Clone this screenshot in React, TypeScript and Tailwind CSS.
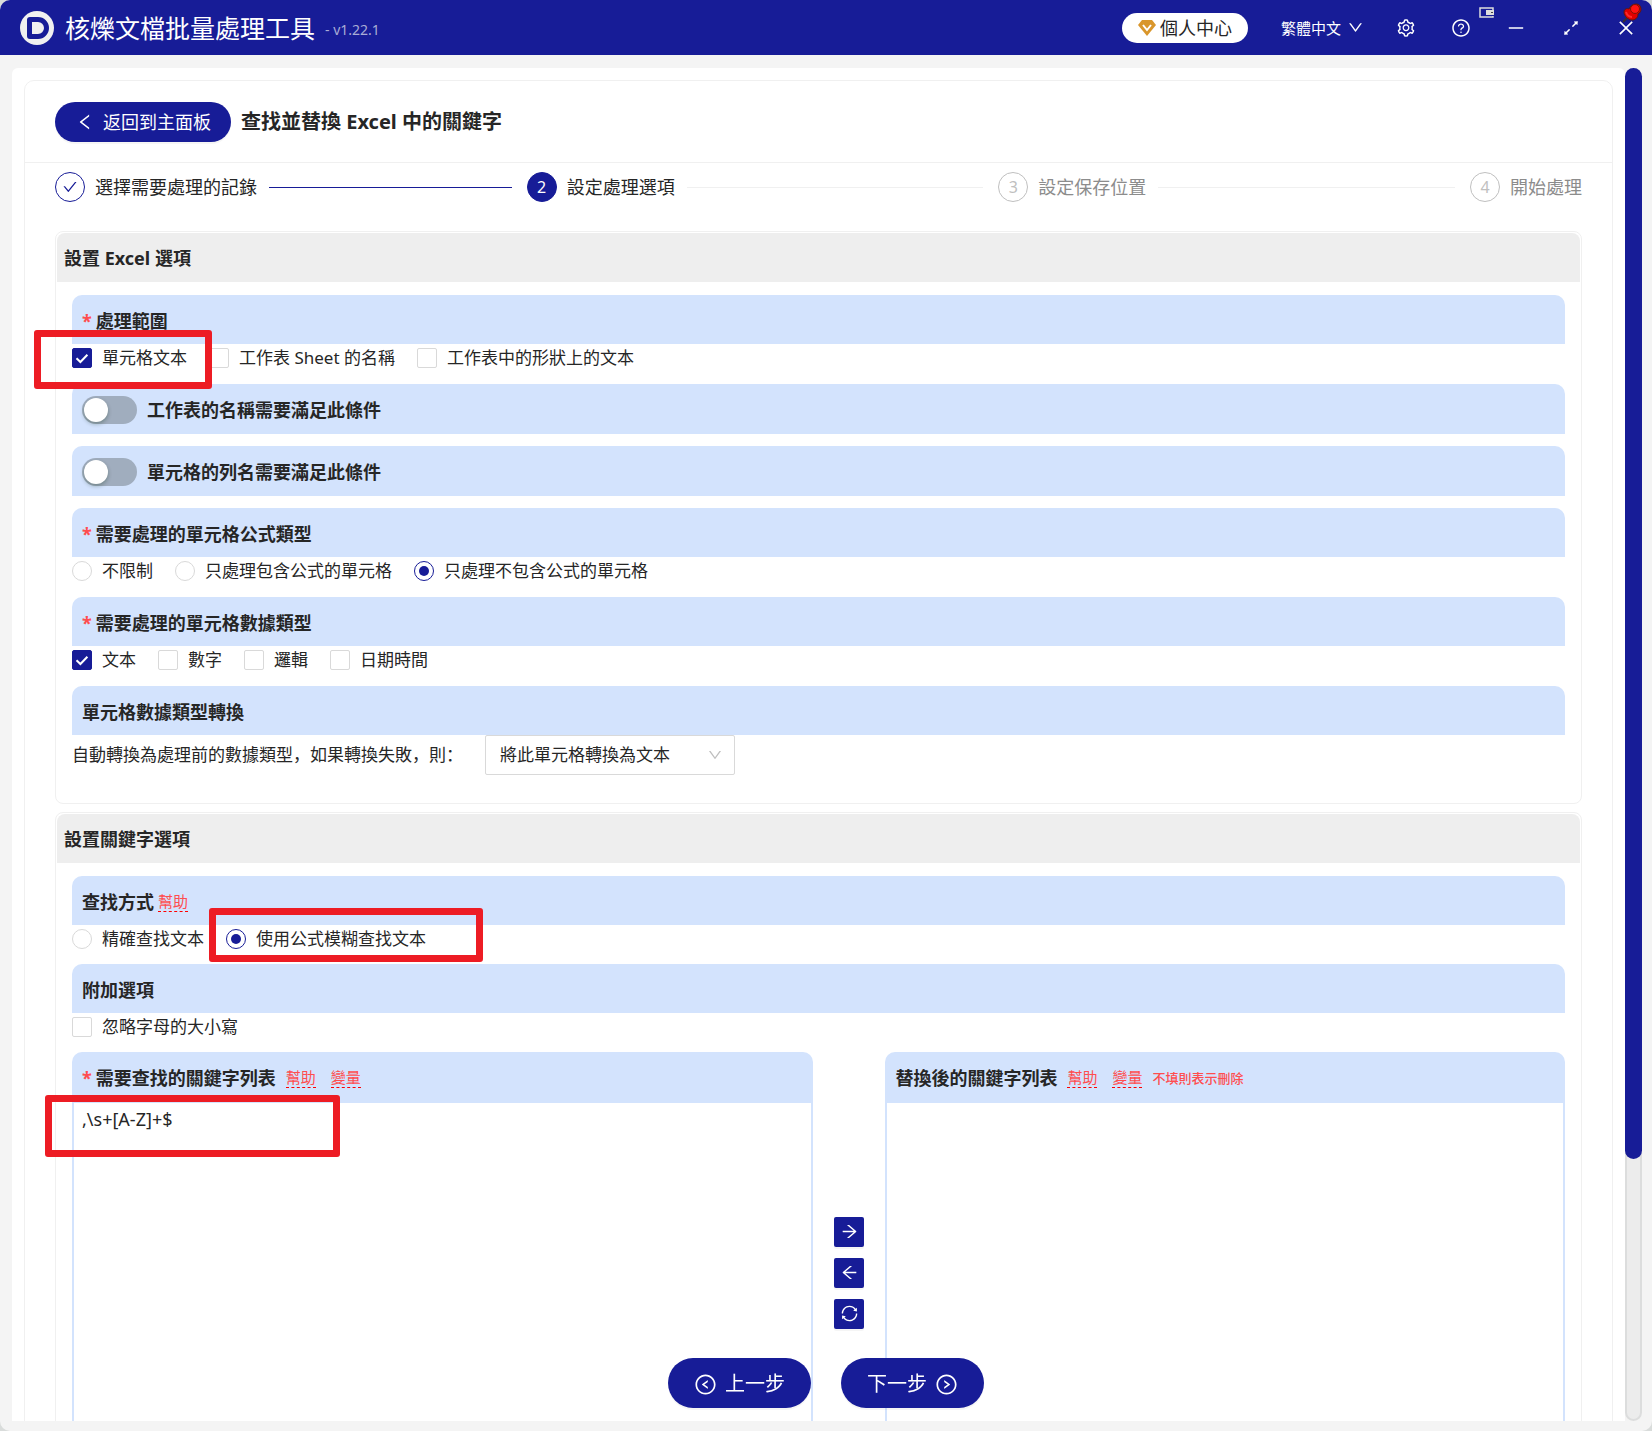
import type { ReactNode } from "react";
import clsx from "clsx";
import {
  AiOutlineArrowLeft,
  AiOutlineArrowRight,
  AiOutlineArrowsAlt,
  AiOutlineCheck,
  AiOutlineClose,
  AiOutlineDown,
  AiOutlineLeft,
  AiOutlineLeftCircle,
  AiOutlineMinus,
  AiOutlineQuestionCircle,
  AiOutlineRightCircle,
  AiOutlineSetting,
  AiOutlineSync
} from "react-icons/ai";

const steps = [
  { label: "選擇需要處理的記錄", state: "done" },
  { label: "設定處理選項", state: "active" },
  { label: "設定保存位置", state: "wait" },
  { label: "開始處理", state: "wait" }
];

function Steps() {
  return (
    <ol className="flex items-center">
      {steps.map((step, index) => (
        <li key={step.label} className={clsx("flex items-center", index < steps.length - 1 && "flex-1")}>
          <span
            className={clsx(
              "mr-2.5 flex h-[30px] w-[30px] items-center justify-center rounded-full border text-base",
              step.state === "done" && "border-[#171c97] text-[#171c97]",
              step.state === "active" && "border-[#171c97] bg-[#171c97] text-white",
              step.state === "wait" && "border-[#bfbfbf] text-[#bfbfbf]"
            )}
          >
            {step.state === "done" ? <AiOutlineCheck className="h-4 w-4" /> : index + 1}
          </span>
          <span className={step.state === "wait" ? "text-[#8c8c8c]" : ""}>{step.label}</span>
          {index < steps.length - 1 && (
            <span
              className={clsx("mr-[15px] ml-3 h-px flex-1", step.state === "done" ? "bg-[#171c97]" : "bg-[#f0f0f0]")}
            />
          )}
        </li>
      ))}
    </ol>
  );
}

function Card({ title, children }: { title: string; children: ReactNode }) {
  return (
    <section className="rounded-lg border border-[#f0f0f0] p-px">
      <h2 className="flex h-[49px] items-center rounded-t-lg bg-[#eeeeee] px-[7px] font-bold">{title}</h2>
      {children}
    </section>
  );
}

function Bar({ required, children }: { required?: boolean; children: ReactNode }) {
  return (
    <div className="flex h-[49px] items-center rounded-t-[10px] bg-[#d3e3fd] px-2.5 pt-0.5 font-bold">
      {required && <span className="mr-1 text-[#ff4d4f]">*</span>}
      {children}
    </div>
  );
}

function SwitchBar({ label }: { label: string }) {
  return (
    <label className="flex h-[50px] items-center gap-2.5 rounded-t-[10px] bg-[#d3e3fd] px-2.5 pt-0.5 font-bold">
      <span className="relative flex h-7 w-[55px]">
        <input
          type="checkbox"
          role="switch"
          className="peer h-7 w-[55px] appearance-none rounded-full bg-[#a0adbe] checked:bg-[#171c97]"
        />
        <span className="pointer-events-none absolute top-0.5 left-0.5 h-6 w-6 rounded-full bg-white shadow-[0_2px_4px_rgba(0,35,11,0.3)] peer-checked:left-[29px]" />
      </span>
      {label}
    </label>
  );
}

function Check({ label, checked }: { label: string; checked?: boolean }) {
  return (
    <label className="flex items-center gap-2.5">
      <span className="relative flex h-5 w-5">
        <input
          type="checkbox"
          defaultChecked={checked}
          className="peer h-5 w-5 appearance-none rounded-xs border border-[#d9d9d9] bg-white checked:border-[#171c97] checked:bg-[#171c97]"
        />
        <svg
          viewBox="0 0 20 20"
          className="pointer-events-none absolute inset-0 hidden h-5 w-5 peer-checked:block"
          fill="none"
          stroke="white"
          strokeWidth="2"
        >
          <path d="M4.5 10.2 8.4 14l7-7.3" />
        </svg>
      </span>
      {label}
    </label>
  );
}

function Radio({ name, label, checked }: { name: string; label: string; checked?: boolean }) {
  return (
    <label className="flex items-center gap-2.5">
      <span className="relative flex h-5 w-5">
        <input
          type="radio"
          name={name}
          defaultChecked={checked}
          className="peer h-5 w-5 appearance-none rounded-full border border-[#d9d9d9] bg-white checked:border-[#171c97]"
        />
        <span className="pointer-events-none absolute inset-[5px] hidden rounded-full bg-[#171c97] peer-checked:block" />
      </span>
      {label}
    </label>
  );
}

function Options({ children }: { children: ReactNode }) {
  return <div className="relative flex h-7 items-center gap-[22px] text-[17px]">{children}</div>;
}

function HelpLink({ children }: { children: ReactNode }) {
  return (
    <a
      href="#"
      className="border-b border-dashed border-[#ff0000] text-[15px] leading-5 font-normal text-[#ff4d4f]"
    >
      {children}
    </a>
  );
}

function Marker({ className }: { className: string }) {
  return (
    <span
      className={clsx("pointer-events-none absolute z-10 rounded-[3px] border-[7px] border-[#ed1c24]", className)}
    />
  );
}

function Pin() {
  return (
    <svg viewBox="0 0 20 20" className="pointer-events-none absolute top-[3px] right-2.5 h-5 w-5">
      <path d="m1 19 5-5" stroke="#3a3030" strokeWidth="2" />
      <path
        d="M2 9c0-3 3-4 5-3 1-3 4-5 7-5 3 0 5 2 5 5 0 2-1 4-3 5 0 4-3 6-6 6-4 0-8-4-8-8z"
        fill="#e00000"
        stroke="#5a1a10"
        strokeWidth="1"
      />
      <circle cx="13" cy="6" r="4.5" fill="#ff1212" stroke="#7a1408" strokeWidth="1" />
      <path d="M4 9c1 3 3 5 6 5" stroke="#ff2a2a" strokeWidth="2" fill="none" />
    </svg>
  );
}

function TitleBar() {
  return (
    <header className="relative flex h-[55px] shrink-0 items-center bg-[#171c97] pr-4 pl-5 text-white">
      <span className="flex h-[34px] w-[34px] items-center justify-center rounded-full bg-[#f0f0f0]">
        <span className="ml-0.5 h-[22px] w-[22px] rounded-l-[3px] rounded-r-[11px] border-5 border-[#171c97]" />
      </span>
      <h1 className="ml-[11px] text-[25px]">核爍文檔批量處理工具</h1>
      <span className="ml-2.5 pt-1 text-sm text-[#a9acd6]">- v1.22.1</span>
      <button className="ml-auto flex h-[30px] items-center gap-1 rounded-full bg-white px-4 text-[#262626]">
        <svg viewBox="0 0 18 16" className="h-4 w-[18px]">
          <path d="M4 0h10l4 5-9 11L0 5z" fill="#d9962b" />
          <path d="m5 5 4 5 4-5" fill="none" stroke="white" strokeWidth="2" />
        </svg>
        個人中心
      </button>
      <button className="ml-[33px] flex items-center gap-1.5 text-[15px]">
        繁體中文
        <AiOutlineDown className="h-[17px] w-[17px]" />
      </button>
      <span className="ml-8 flex gap-[35px]">
        <button aria-label="設定">
          <AiOutlineSetting className="h-5 w-5" />
        </button>
        <button aria-label="幫助">
          <AiOutlineQuestionCircle className="h-5 w-5" />
        </button>
        <button aria-label="最小化">
          <AiOutlineMinus className="h-5 w-5" />
        </button>
        <button aria-label="最大化">
          <AiOutlineArrowsAlt className="h-5 w-5" />
        </button>
        <button aria-label="關閉">
          <AiOutlineClose className="h-5 w-5" />
        </button>
      </span>
      <svg viewBox="0 0 16 12" className="absolute top-[7px] right-[157px] h-3 w-4" fill="none">
        <path d="M14 3V1H1v9h13V9" stroke="#ddd" strokeWidth="1.5" />
        <path d="M7 3h8v5H7z" fill="#ddd" />
        <path d="M12 5h2v1h-2z" fill="#444" />
      </svg>
      <Pin />
    </header>
  );
}

export default function App() {
  return (
    <div className="bg-[#d9dcdb]">
      <div className="flex h-screen flex-col overflow-hidden rounded-[10px] bg-[#f4f4f4] font-['Noto_Sans','Noto_Sans_CJK_SC',sans-serif] text-lg leading-7 text-[#262626]">
        <TitleBar />
        <div className="mt-[13px] mr-2.5 mb-2.5 ml-3 flex min-h-0 flex-1">
          <main className="min-w-0 flex-1 overflow-hidden rounded-t-md bg-white px-3 pt-3">
            <div className="rounded-t-[10px] border border-[#f0f0f0] pb-8">
              <div className="flex h-[82px] items-center gap-2.5 border-b border-[#f0f0f0] px-[30px]">
                <button className="flex h-10 items-center gap-2 rounded-full bg-[#171c97] px-5 text-white shadow-[0_2px_0_rgba(0,0,0,0.04)]">
                  <AiOutlineLeft className="h-5 w-5" />
                  返回到主面板
                </button>
                <span className="text-xl font-bold">查找並替換 Excel 中的關鍵字</span>
              </div>
              <div className="px-[30px] pt-[9px]">
                <Steps />
                <form className="mt-[29px] space-y-2">
                  <Card title="設置 Excel 選項">
                    <div className="space-y-3 px-[15px] pt-[13px] pb-[27px]">
                      <div>
                        <Bar required>處理範圍</Bar>
                        <Options>
                          <Check label="單元格文本" checked />
                          <Check label="工作表 Sheet 的名稱" />
                          <Check label="工作表中的形狀上的文本" />
                          <Marker className="top-[-14px] left-[-38px] h-[59px] w-[178px]" />
                        </Options>
                      </div>
                      <SwitchBar label="工作表的名稱需要滿足此條件" />
                      <SwitchBar label="單元格的列名需要滿足此條件" />
                      <div>
                        <Bar required>需要處理的單元格公式類型</Bar>
                        <Options>
                          <Radio name="formula" label="不限制" />
                          <Radio name="formula" label="只處理包含公式的單元格" />
                          <Radio name="formula" label="只處理不包含公式的單元格" checked />
                        </Options>
                      </div>
                      <div>
                        <Bar required>需要處理的單元格數據類型</Bar>
                        <Options>
                          <Check label="文本" checked />
                          <Check label="數字" />
                          <Check label="邏輯" />
                          <Check label="日期時間" />
                        </Options>
                      </div>
                      <div>
                        <Bar>單元格數據類型轉換</Bar>
                        <div className="flex items-center gap-[22px] text-[17px]">
                          <label htmlFor="fallback">自動轉換為處理前的數據類型，如果轉換失敗，則：</label>
                          <span className="relative">
                            <select
                              id="fallback"
                              className="block h-10 w-[250px] appearance-none rounded-xs border border-[#d9d9d9] bg-white px-3.5"
                            >
                              <option>將此單元格轉換為文本</option>
                            </select>
                            <AiOutlineDown className="pointer-events-none absolute top-3 right-3 h-4 w-4 text-[#bfbfbf]" />
                          </span>
                        </div>
                      </div>
                    </div>
                  </Card>
                  <Card title="設置關鍵字選項">
                    <div className="space-y-[11px] px-[15px] pt-[13px] pb-7">
                      <div>
                        <Bar>
                          <span className="mr-1">查找方式</span>
                          <HelpLink>幫助</HelpLink>
                        </Bar>
                        <Options>
                          <Radio name="mode" label="精確查找文本" />
                          <Radio name="mode" label="使用公式模糊查找文本" checked />
                          <Marker className="top-[-17px] left-[137px] h-[54px] w-[274px]" />
                        </Options>
                      </div>
                      <div>
                        <Bar>附加選項</Bar>
                        <Options>
                          <Check label="忽略字母的大小寫" />
                        </Options>
                      </div>
                      <div className="grid grid-cols-[12fr_auto_11fr] items-center">
                        <div className="relative">
                          <Bar required>
                            <label htmlFor="find" className="mr-2.5">
                              需要查找的關鍵字列表
                            </label>
                            <span className="flex gap-[15px]">
                              <HelpLink>幫助</HelpLink>
                              <HelpLink>變量</HelpLink>
                            </span>
                          </Bar>
                          <textarea
                            id="find"
                            defaultValue=",\s+[A-Z]+$"
                            className="block h-[392px] w-full resize-none border-2 border-[#d3e3fd] px-2 py-0.5 outline-none"
                          />
                          <Marker className="top-[43px] left-[-27px] h-[62px] w-[295px]" />
                        </div>
                        <div className="mx-[21px] flex flex-col gap-[11px]">
                          {[
                            { label: "右移", icon: AiOutlineArrowRight },
                            { label: "左移", icon: AiOutlineArrowLeft },
                            { label: "交換", icon: AiOutlineSync }
                          ].map((item) => (
                            <button
                              key={item.label}
                              type="button"
                              aria-label={item.label}
                              className="flex h-[30px] w-[30px] items-center justify-center rounded-xs bg-[#171c97] text-white shadow-[0_2px_0_rgba(0,0,0,0.04)]"
                            >
                              <item.icon className="h-[19px] w-[19px]" />
                            </button>
                          ))}
                        </div>
                        <div>
                          <Bar>
                            <label htmlFor="replace" className="mr-2.5">
                              替換後的關鍵字列表
                            </label>
                            <span className="flex gap-[15px]">
                              <HelpLink>幫助</HelpLink>
                              <HelpLink>變量</HelpLink>
                            </span>
                            <span className="ml-2.5 text-[13px] font-medium text-[#ff4d4f]">不填則表示刪除</span>
                          </Bar>
                          <textarea
                            id="replace"
                            className="block h-[392px] w-full resize-none border-2 border-[#d3e3fd] px-2 py-0.5 outline-none"
                          />
                        </div>
                      </div>
                    </div>
                  </Card>
                </form>
              </div>
            </div>
          </main>
          <div className="flex w-[17px] flex-col rounded-full border-2 border-[#dcdddd] bg-[#ececec]">
            <div className="-mx-0.5 -mt-0.5 flex-[21] rounded-full bg-[#171c97]" />
            <div className="flex-[5]" />
          </div>
        </div>
        <div className="pointer-events-none fixed inset-x-0 bottom-[23px] z-20 flex justify-center gap-[30px] text-xl text-white">
          <button className="pointer-events-auto flex h-[50px] items-center gap-2 rounded-full bg-[#171c97] px-[26px] pt-0.5 shadow-[0_2px_0_rgba(0,0,0,0.04)]">
            <AiOutlineLeftCircle className="h-[23px] w-[23px]" />
            上一步
          </button>
          <button className="pointer-events-auto flex h-[50px] items-center gap-2 rounded-full bg-[#171c97] px-[26px] pt-0.5 shadow-[0_2px_0_rgba(0,0,0,0.04)]">
            下一步
            <AiOutlineRightCircle className="h-[23px] w-[23px]" />
          </button>
        </div>
      </div>
    </div>
  );
}
